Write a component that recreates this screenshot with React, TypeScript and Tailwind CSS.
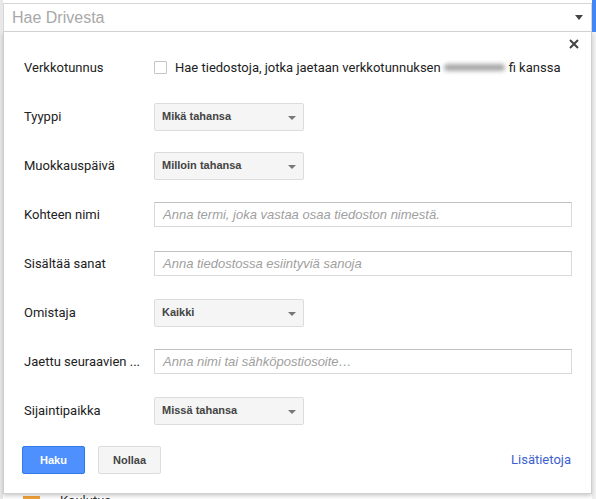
import React from 'react';

const ROBOTO = "font-['Roboto',_'Liberation_Sans',_sans-serif]";
const ARIAL = "font-['Liberation_Sans',_Arial,_sans-serif]";

const SelectBox = ({ value }: { value: string }) => (
  <div className={`relative flex h-[28px] w-[150px] items-center rounded-[2px] border border-[#dcdcdc] bg-[#f5f5f5] pl-[7px] text-[11px] font-bold text-[#444] ${ARIAL}`}>
    {value}
    <span className="absolute right-[7px] top-[12px] h-0 w-0 border-x-[4px] border-t-[4px] border-x-transparent border-t-[#777]" />
  </div>
);

const TextBox = ({ placeholder }: { placeholder: string }) => (
  <div className={`flex h-[25px] w-[418px] items-center border border-[#d9d9d9] border-t-[#c0c0c0] bg-white pl-[8px] text-[13px] italic text-[#a0a0a0] ${ARIAL}`}>
    {placeholder}
  </div>
);

const Row = ({ label, children }: { label: string; children: React.ReactNode }) => (
  <div className="flex h-[49px] items-center pl-[20px]">
    <div className={`w-[130px] text-[13px] text-[#222] ${ROBOTO}`}>{label}</div>
    {children}
  </div>
);

export default function App() {
  return (
    <div className="relative h-[499px] w-[596px] overflow-hidden bg-white">
      {/* file list behind the dropdown */}
      <div className="absolute left-0 top-0 h-full w-[3px] bg-[#e8e8e8]" />
      <div className="absolute right-0 top-0 flex h-full w-[4px] flex-col">
        <div className="h-[32px] w-full bg-[#4285f4]" />
        <div className="flex-1 bg-[#f1f1f1]" />
      </div>
      <div className="absolute left-0 top-[493px] flex w-full items-start">
        <div className="ml-[23px] mt-[3px] h-[10px] w-[17px] bg-[#f0a33a]" />
        <div className={`ml-[20px] text-[13px] leading-[16px] text-[#333] ${ROBOTO}`}>Koulutus</div>
      </div>

      {/* search box + advanced panel */}
      <div className="absolute left-[3px] top-[3px] w-[589px]">
        <div className={`flex h-[29px] items-center justify-between border border-[#d6d6d6] bg-white pl-[8px] pr-[8px] text-[16px] text-[#a8a8a8] ${ARIAL}`}>
          <span>Hae Drivesta</span>
          <span className="h-0 w-0 border-x-[4px] border-t-[5px] border-x-transparent border-t-[#444]" />
        </div>
        <div className="relative border border-t-0 border-[#cfcfcf] bg-white pb-[19px] pt-[11px] shadow-[0_2px_4px_rgba(0,0,0,0.2)]">
          <button className="absolute right-[12px] top-[7px] text-[#444]">
            <svg width="10" height="10" viewBox="0 0 10 10">
              <path d="M1 1L9 9M9 1L1 9" stroke="currentColor" strokeWidth="2" />
            </svg>
          </button>

          <Row label="Verkkotunnus">
            <div className="flex items-center">
              <span className="h-[13px] w-[13px] rounded-[1px] border border-[#c6c6c6] bg-white" />
              <span className={`ml-[8px] flex items-center text-[13px] text-[#222] ${ROBOTO}`}>
                Hae tiedostoja, jotka jaetaan verkkotunnuksen
                <span className="ml-[3px] mr-[4px] inline-block h-[7px] w-[61px] rounded-full bg-[#a8a8a8] blur-[2px]" />
                fi kanssa
              </span>
            </div>
          </Row>
          <Row label="Tyyppi">
            <SelectBox value="Mikä tahansa" />
          </Row>
          <Row label="Muokkauspäivä">
            <SelectBox value="Milloin tahansa" />
          </Row>
          <Row label="Kohteen nimi">
            <TextBox placeholder="Anna termi, joka vastaa osaa tiedoston nimestä." />
          </Row>
          <Row label="Sisältää sanat">
            <TextBox placeholder="Anna tiedostossa esiintyviä sanoja" />
          </Row>
          <Row label="Omistaja">
            <SelectBox value="Kaikki" />
          </Row>
          <Row label="Jaettu seuraavien ...">
            <TextBox placeholder="Anna nimi tai sähköpostiosoite…" />
          </Row>
          <Row label="Sijaintipaikka">
            <SelectBox value="Missä tahansa" />
          </Row>

          <div className="mt-[11px] flex items-center pl-[18px] pr-[20px]">
            <button className={`h-[28px] w-[63px] rounded-[2px] border border-[#3079ed] bg-[#4d90fe] text-[11px] font-bold text-white ${ARIAL}`}>
              Haku
            </button>
            <button className={`ml-[13px] h-[28px] w-[63px] rounded-[2px] border border-[#dcdcdc] bg-[#f5f5f5] text-[11px] font-bold text-[#444] ${ARIAL}`}>
              Nollaa
            </button>
            <a className={`ml-auto text-[13px] text-[#3b5fd1] ${ROBOTO}`}>Lisätietoja</a>
          </div>
        </div>
      </div>
    </div>
  );
}
